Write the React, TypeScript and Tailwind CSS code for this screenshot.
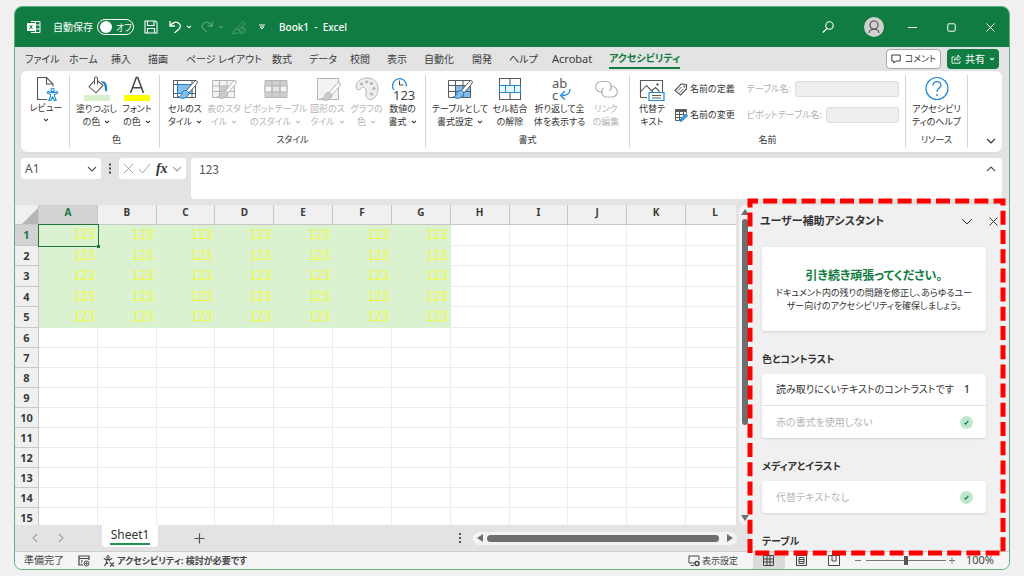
import type { ReactNode } from "react";

const jp = "font-['Noto_Sans','Noto_Sans_CJK_JP',sans-serif] [font-feature-settings:'palt']";

const tabs = [
    { label: "ファイル", width: "w-[44px]" },
    { label: "ホーム", width: "w-[42px]" },
    { label: "挿入", width: "w-[37px]" },
    { label: "描画", width: "w-[38px]" },
    { label: "ページ レイアウト", width: "w-[86px]" },
    { label: "数式", width: "w-[37px]" },
    { label: "データ", width: "w-[41px]" },
    { label: "校閲", width: "w-[37px]" },
    { label: "表示", width: "w-[37px]" },
    { label: "自動化", width: "w-[48px]" },
    { label: "開発", width: "w-[37px]" },
    { label: "ヘルプ", width: "w-[43px]" },
    { label: "Acrobat", width: "w-[57px] text-[11px]" },
];

const columns = ["A", "B", "C", "D", "E", "F", "G", "H", "I", "J", "K", "L"];
const rows = Array.from({ length: 15 }, (_, i) => i + 1);

const Svg = ({ w = 24, h = 24, className = "", children }: { w?: number; h?: number; className?: string; children: ReactNode }) => (
    <svg
        width={w}
        height={h}
        viewBox={`0 0 ${w} ${h}`}
        fill="none"
        stroke="currentColor"
        className={`shrink-0 ${className}`}
        aria-hidden="true"
    >
        {children}
    </svg>
);

const Chevron = ({ className = "" }: { className?: string }) => (
    <Svg w={6} h={4} className={className}>
        <path d="M1 .8 3 2.8 5 .8" strokeWidth="1.1" />
    </Svg>
);

const BigChevron = ({ className = "" }: { className?: string }) => (
    <Svg w={10} h={6} className={className}>
        <path d="M1 1 5 5 9 1" strokeWidth="1.1" />
    </Svg>
);

const Brush = ({ blue }: { blue?: boolean }) => (
    <>
        <path d="M26 6c-1-1-2.600.2-4 1.800L15.500 15.500l2.500 2.300 6.500-7.300c1.600-2 2.400-3.600 1.500-4.500Z" fill="#fff" />
        <path
            d="M15.500 15.500c-2.700-.4-4.200 1-4.700 3.200-.4 1.700-1.600 2.600-3.300 2.800 2 2.700 9.300 3 10.500-3.700Z"
            fill={blue ? "#83beec" : "#cccccc"}
            stroke={blue ? "#1f7fc9" : "currentColor"}
        />
    </>
);

const ReviewIcon = () => (
    <Svg w={26} h={26} className="text-[#555]">
        <path d="M14 24.500H4.500v-22h9L20 9v2.500M13.500 2.500V9H20" strokeWidth="1.100" />
        <g stroke="#1f8ad6" strokeWidth="1.100">
            <path d="M15 16.500c3 1.500 6 1.500 9 0l.7 1.400-3.200 1.600v2l1.700 4-1.400.5-2.300-4-2.300 4-1.400-.5 1.700-4v-2l-3.200-1.600Z" fill="#fff" />
            <circle cx="19.500" cy="15" r="1.700" fill="#fff" />
        </g>
    </Svg>
);

const FillIcon = () => (
    <Svg w={28} h={26}>
        <path d="M11.500 5.500 6 11.800l7 6 7-7.300-5-4.500M11.500 9.500V3.500c0-2 3-2 3 0v6" strokeWidth="1.100" />
        <path d="M17.500 6.500c4.500-1 7.500 2 6.500 10-1.800 0-2.300-1.500-2.200-3.500 0-3-1.300-5-4.300-6.500Z" fill="#1f7fc9" stroke="none" />
        <path d="M1 20h26v6H1z" fill="#d5f0cb" stroke="none" />
    </Svg>
);

const FontColorIcon = () => (
    <Svg w={28} h={26} className="text-[#444]">
        <path d="M7.500 18 13.300 2.500h1.400l5.800 15.500M9.500 12.800h9" strokeWidth="1.500" />
        <path d="M1 20h26v6H1z" fill="#ffff00" stroke="none" />
    </Svg>
);

const CellStyleIcon = () => (
    <Svg w={28} h={26}>
        <path d="M2.500 5.500h22v17h-22zM6.500 5.500v17M2.500 9.500h22M2.500 18.500h22M21 5.500v17" />
        <path d="M6.500 9.500H21v9H6.500z" fill="#83beec" stroke="#1f7fc9" />
        <Brush blue />
    </Svg>
);

const TableStyleIcon = () => (
    <Svg w={28} h={26}>
        <path d="M2.500 5.500h22v17h-22z" fill="#f3f3f3" />
        <path d="M9.500 11h7.500v5.500H9.500z" fill="#ccc" stroke="none" />
        <path d="M2.500 11h22M2.500 16.500h22M9.500 5.500v17M17 5.500v17" />
        <Brush />
    </Svg>
);

const PivotStyleIcon = () => (
    <Svg w={28} h={26}>
        <path d="M3 5.500h22v17H3z" fill="#cfcfcf" />
        <path d="M3 11h22v6H3z" fill="#f5f5f5" />
        <path d="M10 11h8v6h-8z" fill="#e3e3e3" />
        <path d="M10 5.500v17M18 5.500v17" />
    </Svg>
);

const ShapeStyleIcon = () => (
    <Svg w={28} h={26}>
        <path d="M3.500 3.500h21v21h-21z" fill="#f3f3f3" />
        <g transform="translate(0 2)">
            <Brush />
        </g>
    </Svg>
);

const PaletteIcon = () => (
    <Svg w={28} h={26}>
        <path d="M14 3C7 3 3 7.500 3 12c0 3 3.500 3.500 5 1.500 2-2.500 6-.5 5 3.500-1 4 1 8 5 7.500 4-1 7-5 7-10.500C25 7 21 3 14 3Z" fill="#efefef" />
        <g fill="#bbb" strokeWidth=".8">
            <circle cx="8.500" cy="9" r="1.300" />
            <circle cx="13.500" cy="7" r="1.300" />
            <circle cx="18.500" cy="8.500" r="1.300" />
            <circle cx="21" cy="13.500" r="1.300" />
            <circle cx="18.500" cy="19" r="1.300" />
        </g>
    </Svg>
);

const NumberIcon = () => (
    <svg width="28" height="26" viewBox="0 0 28 26" fill="none" className="shrink-0 overflow-visible" aria-hidden="true">
        <path d="M5 15A7 7 0 1 1 17.500 11.500" stroke="#1f8ad6" strokeWidth="1.200" />
        <path d="M10.500 5.500v4.500h4" stroke="#444" />
        <text x="4" y="25" fontSize="13" fill="#444" fontFamily="Noto Sans">123</text>
    </svg>
);

const FormatTableIcon = () => (
    <Svg w={28} h={26}>
        <path d="M9.500 10.500h15v12h-15z" fill="#83beec" stroke="none" />
        <path d="M2.500 5.500h22v17h-22zM2.500 10.500h22M2.500 16.500h22M9.500 5.500v17M17 5.500v17" />
        <Brush blue />
    </Svg>
);

const UnmergeIcon = () => (
    <Svg w={28} h={26}>
        <path d="M3.500 3.500h21v21h-21zM14 3.500V10M14 18v6.500" strokeWidth="1.100" />
        <path d="M3.500 10.500h21v7h-21z" fill="#e9f4fc" stroke="#1f8ad6" />
        <path d="M9.500 10.500v7M18.500 10.500v7" stroke="#1f8ad6" />
    </Svg>
);

const WrapIcon = () => (
    <svg width="28" height="26" viewBox="0 0 28 26" fill="none" className="shrink-0 overflow-visible" aria-hidden="true">
        <text x="6" y="13" fontSize="13" fill="#555" fontFamily="Noto Sans">ab</text>
        <text x="6" y="25" fontSize="13" fill="#555" fontFamily="Noto Sans">c</text>
        <path d="M24 14c0 4-2 6.500-8 6.500M19 16l-4.500 4.500L19 24.500" stroke="#1f8ad6" strokeWidth="1.300" />
    </svg>
);

const LinkIcon = () => (
    <Svg w={28} h={26}>
        <path d="M11 17H9A5.200 5.200 0 0 1 9 6.500h5a5.200 5.200 0 0 1 3.500 9.200" strokeWidth="1.200" />
        <path d="M17.500 11.500H20A5.200 5.200 0 0 1 20 22h-5a5.200 5.200 0 0 1-3.500-9.200" strokeWidth="1.200" />
    </Svg>
);

const AltTextIcon = () => (
    <Svg w={28} h={26}>
        <path d="M9 22.500H2.500v-17h22V17M2.500 17l6-6.500 6.500 6.500M14 15.500l3.500-3 4 4" strokeWidth="1.100" />
        <circle cx="19.500" cy="9.500" r="1.200" fill="currentColor" stroke="none" />
        <path d="M11 17.500h15v8H11z" fill="#fff" stroke="#1f8ad6" strokeWidth="1.200" />
        <path d="M14 20.500h9M14 23h9" />
    </Svg>
);

const HelpIcon = () => (
    <Svg w={28} h={26} className="text-[#1f8ad6]">
        <circle cx="14" cy="13.500" r="11" strokeWidth="1.200" />
        <path d="M10 10.500c0-5 8-5 8-.5 0 3.500-4 3-4 7" strokeWidth="1.300" />
        <circle cx="14" cy="20" r=".9" fill="currentColor" stroke="none" />
    </Svg>
);

const RibbonButton = ({ icon, lines, width, menu, disabled }: { icon: ReactNode; lines: string[]; width: string; menu?: boolean; disabled?: boolean }) => (
    <button
        disabled={disabled}
        className={`flex shrink-0 flex-col items-center whitespace-nowrap text-[9px] leading-[13px] ${width} ${disabled ? "text-[#b5b5b5]" : "text-[#333]"}`}
    >
        <span className={disabled ? "" : "text-[#5a5a5a]"}>{icon}</span>
        <span className="mt-px">{lines[0]}</span>
        <span className="flex items-center gap-1">
            {lines[1]}
            {menu && <Chevron />}
        </span>
    </button>
);

const Group = ({ label, width, children }: { label: string; width: string; children: ReactNode }) => (
    <div className={`flex flex-col border-r border-[#d6d6d6] ${width}`}>
        <div className="flex h-[60px] items-start justify-center">{children}</div>
        <div className="text-center text-[9px] leading-4 text-[#333]">{label}</div>
    </div>
);

const TitleBar = () => (
    <header className="flex h-10 shrink-0 items-center bg-[#107c41] text-white">
        <Svg w={14} h={14} className="ml-3">
            <path d="M4 1.500h9v11H4M8.500 1.500v11M4 5h9M4 9h9" />
            <path d="M0 3h8v8H0z" fill="#fff" stroke="none" />
            <path d="m2.500 5 3 4M5.500 5l-3 4" stroke="#107c41" />
        </Svg>
        <span className="ml-3 w-[38px] whitespace-nowrap text-[10px]">自動保存</span>
        <button
            className="ml-1.5 flex h-4 w-[37px] items-center gap-1 rounded-full border border-white px-0.5 text-[9px] leading-none whitespace-nowrap"
            aria-label="自動保存の切り替え"
        >
            <span className="size-3 shrink-0 rounded-full bg-white" />
            <span>オフ</span>
        </button>
        <button className="ml-2.5" aria-label="上書き保存">
            <Svg w={14} h={14}>
                <path d="M1 1h10.500L13 2.500V13H1zM3.500 1v4.500h6.500V1M3.500 13V8.500h7V13" strokeWidth="1.100" />
            </Svg>
        </button>
        <button className="ml-2.5 flex items-center gap-1" aria-label="元に戻す">
            <Svg w={14} h={14}>
                <path d="M2 1v5h5M2 6c3-4 6.500-5 9-2.500 2 2 1.500 4 0 5.500L6.500 13" strokeWidth="1.300" />
            </Svg>
            <Chevron />
        </button>
        <button className="ml-2 flex items-center gap-1 text-[#4f9f73]" disabled aria-label="やり直し">
            <Svg w={14} h={14}>
                <path d="M12.500 1v5h-5M12.500 6c-3-4-6.500-5-9-2.500-2 2-1.500 4 0 5.500L7 12" strokeWidth="1.300" />
            </Svg>
            <Chevron />
        </button>
        <button className="ml-2 text-[#4f9f73]" disabled aria-label="アクセシビリティ チェック">
            <Svg w={15} h={15}>
                <path d="M1.500 11 11 1.500 13.500 4 9 7.500M1.500 11l-.8 2.800 5-.8M3.500 9l3.500 1" />
                <circle cx="10" cy="10.500" r="3" />
                <path d="m8 12.500 4-4" />
            </Svg>
        </button>
        <button className="ml-3" aria-label="クイック アクセス">
            <Svg w={6} h={6}>
                <path d="M0 1h6M1 3l2 2 2-2z" />
            </Svg>
        </button>
        <h1 className="ml-3.5 flex-1 text-[10px] font-medium whitespace-pre">Book1  -  Excel</h1>
        <button aria-label="検索">
            <Svg w={12} h={12}>
                <circle cx="7.500" cy="4.500" r="3.700" strokeWidth="1.100" />
                <path d="M5 7.500.8 11.500" strokeWidth="1.100" />
            </Svg>
        </button>
        <button className="ml-[30px]" aria-label="アカウント">
            <Svg w={20} h={20}>
                <circle cx="10" cy="10" r="10" fill="#d0d0d0" stroke="none" />
                <g stroke="#555" strokeWidth="1.200">
                    <circle cx="10" cy="8" r="4" />
                    <path d="M5 16c.5-5 9.500-5 10 0" />
                </g>
            </Svg>
        </button>
        <button className="ml-6" aria-label="最小化">
            <Svg w={9} h={9}><path d="M0 4.500h9" /></Svg>
        </button>
        <button className="ml-[30px]" aria-label="最大化">
            <Svg w={9} h={9}><rect x=".8" y=".8" width="7.400" height="7.400" rx="1" /></Svg>
        </button>
        <button className="mr-[14px] ml-[30px]" aria-label="閉じる">
            <Svg w={9} h={9}><path d="m.5.5 8 8M8.500.5l-8 8" /></Svg>
        </button>
    </header>
);

const TabBar = () => (
    <nav className="flex h-6 shrink-0 items-center pl-2.5 text-[10px] text-[#3b3b3b]">
        {tabs.map((tab) => (
            <button key={tab.label} className={`shrink-0 text-left whitespace-nowrap ${tab.width}`}>{tab.label}</button>
        ))}
        <button className="border-b-2 border-[#107c41] leading-[18px] font-bold whitespace-nowrap text-[#107c41]">アクセシビリティ</button>
        <button className="ml-auto flex h-5 items-center gap-1 rounded border border-[#a8a8a8] bg-white px-1 text-[9px] whitespace-nowrap">
            <Svg w={10} h={10}>
                <path d="M.8 1h8.400v6H5L2.800 9V7h-2z" />
            </Svg>
            コメント
        </button>
        <button className="mr-2.5 ml-1.5 flex h-5 w-[52px] items-center justify-center gap-1 rounded bg-[#107c41] whitespace-nowrap text-white">
            <Svg w={10} h={10}>
                <path d="M3.500 3H1v6.200h8V7M3.500 6.500c0-2.500 1.500-3.300 3.500-3.300V1l2.500 3L7 6.500V5c-1.500 0-2.500.3-3.500 1.500Z" strokeWidth=".9" />
            </Svg>
            共有
            <Chevron />
        </button>
    </nav>
);

const Ribbon = () => (
    <div className="mr-[7px] ml-1.5 flex h-[81px] shrink-0 rounded-md bg-white py-1 shadow-xs">
        <div className="flex w-[49px] shrink-0 justify-center border-r border-[#d6d6d6] pl-0.5">
            <button className="flex flex-col items-center text-[9px] leading-[13px] whitespace-nowrap text-[#333]">
                <ReviewIcon />
                <span>レビュー</span>
                <Chevron className="mt-1" />
            </button>
        </div>
        <Group label="色" width="w-[90px] shrink-0 pl-1">
            <RibbonButton icon={<FillIcon />} lines={["塗りつぶし", "の色"]} width="w-[41px]" menu />
            <RibbonButton icon={<FontColorIcon />} lines={["フォント", "の色"]} width="w-[40px]" menu />
        </Group>
        <Group label="スタイル" width="w-[266px] shrink-0">
            <RibbonButton icon={<CellStyleIcon />} lines={["セルのス", "タイル"]} width="w-[39px]" menu />
            <RibbonButton icon={<TableStyleIcon />} lines={["表のスタ", "イル"]} width="w-[39px]" menu disabled />
            <RibbonButton icon={<PivotStyleIcon />} lines={["ピボットテーブル", "のスタイル"]} width="w-[64px]" menu disabled />
            <RibbonButton icon={<ShapeStyleIcon />} lines={["図形のス", "タイル"]} width="w-[40px]" menu disabled />
            <RibbonButton icon={<PaletteIcon />} lines={["グラフの", "色"]} width="w-[38px]" menu disabled />
            <RibbonButton icon={<NumberIcon />} lines={["数値の", "書式"]} width="w-[34px]" menu />
        </Group>
        <Group label="書式" width="w-[204px] shrink-0">
            <RibbonButton icon={<FormatTableIcon />} lines={["テーブルとして", "書式設定"]} width="w-[58px]" menu />
            <RibbonButton icon={<UnmergeIcon />} lines={["セル結合", "の解除"]} width="w-[42px]" />
            <RibbonButton icon={<WrapIcon />} lines={["折り返して全", "体を表示する"]} width="w-[57px]" />
            <RibbonButton icon={<LinkIcon />} lines={["リンク", "の編集"]} width="w-[36px]" disabled />
        </Group>
        <Group label="名前" width="min-w-0 flex-1">
            <RibbonButton icon={<AltTextIcon />} lines={["代替テ", "キスト"]} width="w-[44px]" />
            <div className="flex min-w-0 flex-1 flex-col gap-2.5 pt-1.5 pr-1.5 text-[9px] whitespace-nowrap text-[#333]">
                <div className="flex h-4 items-center">
                    <button className="flex items-center gap-0.5">
                        <Svg w={14} h={14} className="text-[#5a5a5a]">
                            <path d="M1 8.500 7 2l5.500.5V7L6.500 13z" strokeWidth="1.200" />
                            <path d="m4 8.500 3.500-3.500M6 10.500 9.500 7" />
                            <circle cx="10.300" cy="4.500" r=".7" />
                        </Svg>
                        名前の定義
                    </button>
                    <label htmlFor="table-name" className="ml-3 text-[#b0b0b0]">テーブル名:</label>
                    <input id="table-name" disabled className="ml-1 h-4 min-w-0 flex-1 rounded-[3px] border border-[#dcdcdc] bg-[#eeeeee]" />
                </div>
                <div className="flex h-4 items-center">
                    <button className="flex items-center gap-0.5">
                        <Svg w={14} h={14} className="text-[#5a5a5a]">
                            <path d="M1.500 1.500h11v2h-11z" fill="currentColor" />
                            <path d="M1.500 3.500v9h4M12.500 3.500v2M1.500 6.500h9M1.500 9.500h6M5.500 3.500v9M9.500 3.500v4" />
                            <path d="m6 13.500 1-3 5-4.500 1.500 2-5 4.500z" fill="#3f9fe0" stroke="#1f7fc9" />
                        </Svg>
                        名前の変更
                    </button>
                    <label htmlFor="pivot-name" className="ml-3 text-[#b0b0b0]">ピボットテーブル名:</label>
                    <input id="pivot-name" disabled className="ml-1 h-4 min-w-0 flex-1 rounded-[3px] border border-[#dcdcdc] bg-[#eeeeee]" />
                </div>
            </div>
        </Group>
        <Group label="リソース" width="w-[62px] shrink-0">
            <RibbonButton icon={<HelpIcon />} lines={["アクセシビリ", "ティのヘルプ"]} width="w-[60px]" />
        </Group>
        <button className="flex w-[34px] shrink-0 items-end justify-end pr-1.5 pb-1 text-[#333]" aria-label="リボンを折りたたむ">
            <BigChevron />
        </button>
    </div>
);

const FormulaBar = () => (
    <div className="mt-1.5 mr-[7px] ml-1.5 flex h-[41px] shrink-0 items-start text-xs text-[#555]">
        <div className="flex h-[21px] w-20 items-center rounded-[3px] bg-white pr-1 pl-1">
            <input aria-label="名前ボックス" defaultValue="A1" className="w-0 flex-1" />
            <BigChevron />
        </div>
        <Svg w={18} h={21}>
            <path d="M9 5.500v2M9 9.500v2M9 13.500v2" strokeWidth="2" stroke="#444" />
        </Svg>
        <div className="flex h-[21px] w-[67px] items-center justify-between rounded-[3px] bg-white px-1 text-[#a5a5a5]">
            <Svg w={11} h={11}><path d="m1 1 9 9M10 1l-9 9" /></Svg>
            <Svg w={13} h={11}><path d="m1 6 3.500 4L12 1" /></Svg>
            <button className="font-['Liberation_Serif',serif] text-sm leading-none font-bold text-[#333] italic">fx</button>
            <BigChevron />
        </div>
        <div className="ml-[5px] flex h-full flex-1 items-start rounded-[3px] bg-white pr-1.5 pl-2">
            <input aria-label="数式バー" defaultValue="123" className="h-5 w-0 flex-1 font-['Noto_Sans_CJK_JP',sans-serif]" />
            <BigChevron className="mt-2 rotate-180" />
        </div>
    </div>
);

const Sheet = () => (
    <div className="flex min-h-0 flex-1">
        <div className="min-w-0 flex-1 overflow-hidden bg-white">
            <table className="w-full table-fixed border-separate border-spacing-0">
                <colgroup>
                    <col className="w-6" />
                    {columns.map((c) => (
                        <col key={c} className={c === "L" ? "w-[50px]" : ""} />
                    ))}
                </colgroup>
                <thead>
                    <tr className="h-5 text-[10px] leading-[14px] font-bold text-[#3a3a3a]">
                        <th className="border-r border-b border-[#c8c8c8] bg-[#f0f0f0] p-0 align-bottom">
                            <Svg w={16} h={16} className="ml-auto">
                                <path d="M16 0v16H0z" fill="#b5b5b5" stroke="none" />
                            </Svg>
                        </th>
                        {columns.map((c) => (
                            <th
                                key={c}
                                className={`border-b border-[#c8c8c8] p-0 align-top ${c === "A" ? "bg-[#d2d2d2] text-[#217346]" : "bg-[#f0f0f0]"} ${c === "L" ? "pl-2" : "border-r"}`}
                            >
                                {c}
                            </th>
                        ))}
                    </tr>
                </thead>
                <tbody>
                    {rows.map((r) => (
                        <tr key={r} className={r <= 5 && r % 2 === 1 ? "h-[21px]" : "h-5"}>
                            <th
                                className={`border-r border-b border-[#c8c8c8] p-0 text-[11px] leading-4 font-bold ${r === 1 ? "bg-[#d2d2d2] text-[#217346]" : "bg-[#f0f0f0] text-[#3a3a3a]"}`}
                            >
                                {r}
                            </th>
                            {columns.map((c, i) =>
                                r <= 5 && i < 7 ? (
                                    <td
                                        key={c}
                                        className={`bg-[#daf2d0] p-0 pr-[3px] text-right align-top font-['Noto_Sans_CJK_JP',sans-serif] text-[13px] leading-[18px] text-[#f1f83c] ${r === 1 && i === 0 ? "relative z-10" : ""}`}
                                    >
                                        123
                                        {r === 1 && i === 0 && (
                                            <span className="absolute -inset-px border border-[#217346]">
                                                <span className="absolute -right-0.5 -bottom-0.5 size-[3px] bg-[#217346]" />
                                            </span>
                                        )}
                                    </td>
                                ) : (
                                    <td key={c} className={`border-b border-[#ececec] p-0 ${c === "L" ? "" : "border-r"}`} />
                                )
                            )}
                        </tr>
                    ))}
                </tbody>
            </table>
        </div>
        <div className="flex w-[15px] shrink-0 flex-col items-center bg-[#e3e3e3] pl-0.5 text-[#6e6e6e]">
            <div className="flex h-full w-3 flex-col items-center rounded-full bg-[#f3f3f3] py-1">
                <Svg w={8} h={6}><path d="M4 0 8 6H0z" fill="currentColor" stroke="none" /></Svg>
                <div className="mt-1 h-[66%] w-1.5 rounded-full bg-[#6e6e6e]" />
                <Svg w={8} h={6} className="mt-auto"><path d="M4 6 8 0H0z" fill="currentColor" stroke="none" /></Svg>
            </div>
        </div>
    </div>
);

const SheetTabs = () => (
    <div className="flex h-[26px] shrink-0 items-center text-[#555]">
        <Svg w={34} h={12} className="ml-4 text-[#a0a0a0]">
            <path d="M6 2 2 6l4 4M28 2l4 4-4 4" strokeWidth="1.100" />
        </Svg>
        <button className="mb-1 ml-[37px] flex h-[22px] w-[56px] items-center justify-center rounded-b bg-white text-xs text-[#333]">
            <span className="border-b-2 border-[#1f9154] px-px leading-4">Sheet1</span>
        </button>
        <button className="ml-9" aria-label="新しいシート">
            <Svg w={11} h={11}><path d="M5.500.5v10M.5 5.500h10" strokeWidth="1.200" /></Svg>
        </button>
        <Svg w={4} h={12} className="mr-[11px] ml-auto">
            <path d="M2 1v2M2 5v2M2 9v2" strokeWidth="2" />
        </Svg>
        <div className="mr-3.5 flex h-[13px] w-[264px] items-center rounded-full bg-[#f3f3f3] px-1 text-[#6e6e6e]">
            <Svg w={6} h={8}><path d="M0 4 6 0v8z" fill="currentColor" stroke="none" /></Svg>
            <div className="mr-2 ml-1 h-[7px] flex-1 rounded-full bg-[#6e6e6e]" />
            <Svg w={6} h={8}><path d="M6 4 0 0v8z" fill="currentColor" stroke="none" /></Svg>
        </div>
    </div>
);

const Done = () => (
    <Svg w={13} h={13}>
        <circle cx="6.500" cy="6.500" r="6.500" fill="#c0e6cf" stroke="none" />
        <path d="m4.500 6.800 1.300 1.300 2.500-3.300" stroke="#107c41" strokeWidth="1.200" />
    </Svg>
);

const Assistant = () => (
    <aside className="relative flex w-[258px] shrink-0 flex-col bg-[#f0f0f0] text-[#333]">
        <div className="flex min-h-0 flex-1 flex-col overflow-hidden pr-[23px] pl-[11px]">
            <div className="-mr-3 -ml-0.5 flex h-8 shrink-0 items-center">
                <h2 className="flex-1 text-[11px] font-bold">ユーザー補助アシスタント</h2>
                <button aria-label="オプション">
                    <Svg w={12} h={7}><path d="m1 1 5 5 5-5" /></Svg>
                </button>
                <button className="ml-4" aria-label="閉じる">
                    <Svg w={9} h={9}><path d="m.5.5 8 8M8.500.5l-8 8" /></Svg>
                </button>
            </div>
            <div className="mt-2.5 flex h-[84px] shrink-0 flex-col justify-center rounded-[3px] bg-white text-center shadow-sm">
                <p className="text-xs leading-5 font-bold text-[#107c41]">引き続き頑張ってください。</p>
                <p className="px-3 text-[9px] leading-[13px]">
                    ドキュメント内の残りの問題を修正し、あらゆるユー
                    <br />
                    ザー向けのアクセシビリティを確保しましょう。
                </p>
            </div>
            <h3 className="mt-5 text-[10px] leading-4 font-bold">色とコントラスト</h3>
            <ul className="mt-[7px] shrink-0 divide-y divide-[#e3e3e3] rounded-[3px] bg-white text-[10px] shadow-sm">
                <li className="flex h-8 items-center justify-between pr-[13px] pl-3.5 whitespace-nowrap">
                    読み取りにくいテキストのコントラストです
                    <span className="w-3 text-center text-[11px] font-medium">1</span>
                </li>
                <li className="flex h-8 items-center justify-between pr-[13px] pl-3.5 text-[#b5b5b5]">
                    赤の書式を使用しない
                    <Done />
                </li>
            </ul>
            <h3 className="mt-5 text-[10px] leading-4 font-bold">メディアとイラスト</h3>
            <div className="mt-[7px] flex h-8 shrink-0 items-center justify-between rounded-[3px] bg-white pr-[13px] pl-3.5 text-[10px] text-[#b5b5b5] shadow-sm">
                代替テキストなし
                <Done />
            </div>
            <h3 className="mt-5 text-[10px] leading-4 font-bold">テーブル</h3>
        </div>
        <div className="pointer-events-none absolute -top-1 right-1.5 -bottom-0.5 -left-px">
            <svg className="size-full overflow-visible" aria-hidden="true">
                <rect width="100%" height="100%" fill="none" stroke="#ff0000" strokeWidth="5" strokeDasharray="14 5.200" strokeDashoffset="6" />
            </svg>
        </div>
    </aside>
);

const StatusBar = () => (
    <footer className="flex h-[18px] shrink-0 items-center border-t border-[#cfcfcf] bg-[#f4f4f4] pl-[9px] text-[10px] whitespace-nowrap text-[#444]">
        <span className="w-[54px]">準備完了</span>
        <Svg w={12} h={12}>
            <path d="M11 5V1H1v9h4M1 3.500h10M3 6h2M3 8h1" strokeWidth="1.200" />
            <circle cx="8.500" cy="8.500" r="2.500" />
            <circle cx="8.500" cy="8.500" r=".8" fill="currentColor" />
        </Svg>
        <button className="ml-[13px] flex items-center gap-0.5 text-[9px] font-bold">
            <Svg w={12} h={12}>
                <circle cx="5" cy="2" r="1.300" />
                <path d="M.8 3.500c2.500 1.300 6 1.300 8.500 0M3.500 5v2.500L1.500 11M6.500 5v1.500M3.500 9 5 7.500M7 7.500l4 4M11 7.500l-4 4" strokeWidth="1.100" />
            </Svg>
            アクセシビリティ: 検討が必要です
        </button>
        <button className="mr-[15px] ml-auto flex items-center gap-0.5 text-[9px]">
            <Svg w={12} h={12}>
                <path d="M11 5V1H1v7h5M3 10.500h3" />
                <circle cx="9" cy="8.500" r="2" strokeWidth="1.500" />
            </Svg>
            表示設定
        </button>
        <button className="flex h-full w-8 items-center justify-center bg-[#dadada]" aria-label="標準">
            <Svg w={11} h={11}><path d="M.5.5h10v10H.5zM.5 4h10M.5 7h10M4 .5v10M7 .5v10" /></Svg>
        </button>
        <button className="ml-[11px]" aria-label="ページ レイアウト">
            <Svg w={11} h={11}><path d="M.5.5h10v10H.5zM3 2.500h5v6H3zM3 4.500h5M3 6.500h5" /></Svg>
        </button>
        <button className="ml-[21px]" aria-label="改ページ プレビュー">
            <Svg w={12} h={11}><path d="M.5.5h11v10H.5zM4 .5V6h4V.5" /></Svg>
        </button>
        <Svg w={102} h={11} className="ml-3.5 text-[#777]">
            <path d="M1 5.500h6M12 5.500h80M95 5.500h6M98 2.500v6" />
            <path d="M50 1h4v9h-4z" fill="#555" stroke="none" />
        </Svg>
        <span className="mr-[15px] ml-2.5 text-[11px]">100%</span>
    </footer>
);

export default function App() {
    return (
        <div className={`flex h-screen bg-[#f1f1f1] px-3.5 py-1.5 ${jp}`}>
            <div className="flex min-w-0 flex-1 flex-col overflow-hidden rounded-lg border border-[#5fae80] bg-[#e3e3e3]">
                <TitleBar />
                <TabBar />
                <Ribbon />
                <FormulaBar />
                <div className="mt-1.5 flex min-h-0 flex-1">
                    <main className="flex min-w-0 flex-1 flex-col">
                        <Sheet />
                        <SheetTabs />
                    </main>
                    <Assistant />
                </div>
                <StatusBar />
            </div>
        </div>
    );
}
